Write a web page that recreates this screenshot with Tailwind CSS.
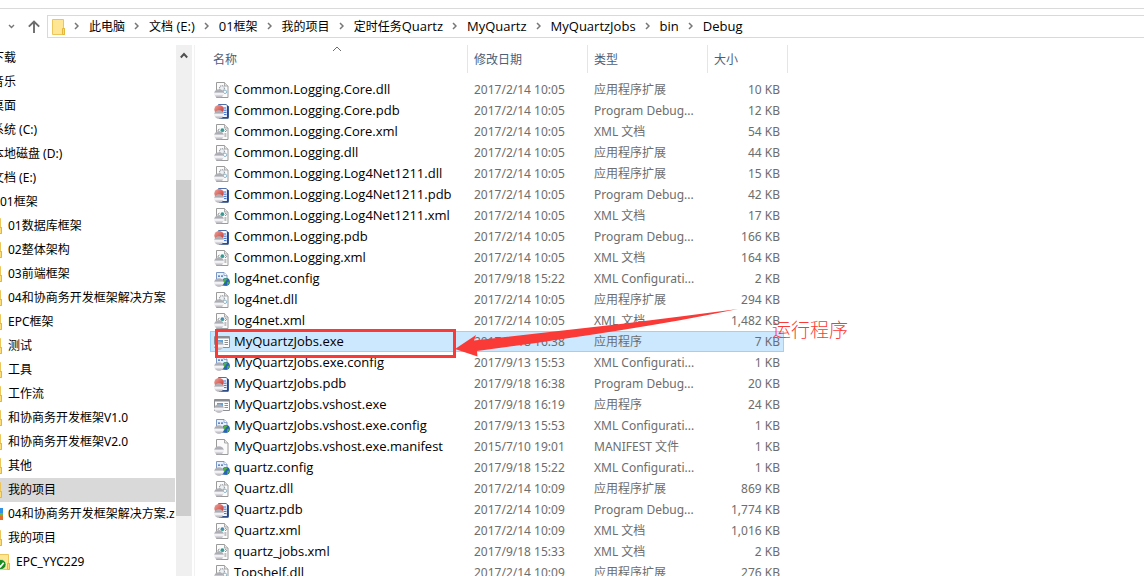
<!DOCTYPE html>
<html lang="zh-CN">
<head>
<meta charset="utf-8">
<meta name="viewport" content="width=device-width, initial-scale=1">
<title>Debug</title>
<script src="https://cdn.jsdelivr.net/npm/@tailwindcss/browser@4"></script>
</head>
<body class="h-screen overflow-hidden bg-white text-black text-[12px] leading-[20px] font-['Noto_Sans','Noto_Sans_CJK_SC',sans-serif]">

<svg class="absolute h-0 w-0" aria-hidden="true">
  <defs>
    <linearGradient id="gear" x1="0" y1="0" x2="0" y2="1">
      <stop offset="0" stop-color="#b4b4ba"/><stop offset=".35" stop-color="#a9a9b2"/><stop offset=".5" stop-color="#f4f4f6"/><stop offset=".7" stop-color="#dcdce2"/><stop offset="1" stop-color="#a8a8ae"/>
    </linearGradient>
    <linearGradient id="red" x1="0" y1="0" x2="1" y2="1">
      <stop offset="0" stop-color="#f0a49c"/><stop offset="1" stop-color="#c22f28"/>
    </linearGradient>
  </defs>
  <symbol id="badge" viewBox="0 0 16 16">
    <ellipse cx="5" cy="11.5" rx="4.8" ry="4.200" fill="url(#gear)"/>
    <rect x=".2" y="10.800" width="9.600" height="2" rx="1" fill="#f3f3f6"/>
  </symbol>
  <symbol id="page" viewBox="0 0 16 16">
    <path d="M2.500 .5h8l3.500 3.500v11.500h-11.500z" fill="#fbfbfb" stroke="#9b9b9b"/>
    <path d="M10.500 .5v3.500h3.500" fill="#e6e6e6" stroke="#9b9b9b" stroke-width=".8"/>
  </symbol>
  <symbol id="dll" viewBox="0 0 16 16">
    <use href="#page"/>
    <circle cx="8" cy="6.200" r="2.500" fill="#eef1f3" stroke="#9aa1a6" stroke-width="1.200" stroke-dasharray="1.300 .6"/>
    <circle cx="11" cy="9.800" r="1.700" fill="#fff" stroke="#8db6cb"/>
    <use href="#badge"/>
  </symbol>
  <symbol id="xml" viewBox="0 0 16 16">
    <use href="#page"/>
    <circle cx="8.400" cy="6.200" r="1.900" fill="#3aa08f"/><circle cx="8" cy="5.600" r=".8" fill="#4a78c8"/>
    <path d="M5.400 4.800L4.100 6.400l1.300 1.600M11.200 4.800l1.300 1.600-1.300 1.600M10.400 10h2M10.400 12h2" fill="none" stroke="#85858a"/>
    <use href="#badge"/>
  </symbol>
  <symbol id="pdb" viewBox="0 0 16 16">
    <path d="M4.500 1.500h7.500l2.500 2v11h-10z" fill="#f4f8ff" stroke="#4f6fa8"/>
    <path d="M13.700 3v12H5" fill="none" stroke="#27457f" stroke-width="1.600"/>
    <path d="M8 5h4M9.500 7.200h3M9.500 9.400h3M10 11.600h2.500" stroke="#3d6fd0"/>
    <circle cx="5" cy="6.600" r="4.700" fill="url(#red)"/>
    <use href="#badge"/>
  </symbol>
  <symbol id="config" viewBox="0 0 16 16">
    <path d="M2.500 1.500h7.500l3 3v10h-10.500z" fill="#e9f1fc" stroke="#7b97c4"/>
    <path d="M10 1.500v3h3" fill="#fff" stroke="#7b97c4" stroke-width=".8"/>
    <path d="M4 5.200h2M7 5.200h2" stroke="#3767bd" stroke-width="1.200"/>
    <circle cx="12" cy="10.800" r="3.900" fill="#2765b4"/>
    <path d="M9.400 8.400c1.500-1.600 3.500-1.400 4 0l-1.600 1.400-1 2.400-1.800-1.600zM13.200 11l2.200-.4c.2 1.600-.8 3-2.400 3.600z" fill="#4fb04c"/>
    <use href="#badge"/>
  </symbol>
  <symbol id="manifest" viewBox="0 0 16 16">
    <use href="#page"/><use href="#badge"/>
  </symbol>
  <symbol id="exe" viewBox="0 0 16 16">
    <path d="M.5 2.500h15v11h-15z" fill="#fdfdfd" stroke="#8b8f93"/>
    <path d="M1 3.500h14" stroke="#8b8f93" stroke-width="2"/>
    <path d="M3 6h6v4H3z" fill="#5f9fd6"/>
    <path d="M10.500 6.500h3.500M10.500 8.500h3.500M10.500 10.500h3.500" stroke="#8f8f8f"/>
    <use href="#badge"/>
  </symbol>
  <symbol id="folder" viewBox="0 0 16 16">
    <path d="M2.500 .5h11v9h1v6h-12z" fill="#ffe694" stroke="#ecc55b"/>
    <path d="M12.500 9.500h2v6h-2z" fill="#fcdc77" stroke="#e5b63c"/>
  </symbol>
  <symbol id="synced" viewBox="0 0 16 16">
    <use href="#folder"/>
    <circle cx="6" cy="10.500" r="5" fill="#168a1c" stroke="#fff" stroke-width=".6"/>
    <path d="M3.500 10.500l2 2.200 3.200-4" fill="none" stroke="#fff" stroke-width="1.800"/>
  </symbol>
  <symbol id="zip" viewBox="0 0 16 16">
    <path d="M1 2h15v5H1z" fill="#2f8fe0"/><path d="M1 7h15v3H1z" fill="#6cb545"/><path d="M1 10h15v4H1z" fill="#e26a2c"/>
  </symbol>
  <symbol id="chev" viewBox="0 0 5 8">
    <path d="M1 1l3 3-3 3" fill="none" stroke="#777" stroke-width="1.500"/>
  </symbol>
</svg>

<div class="flex h-full flex-col">
  <div class="h-[9px] shrink-0 border-b border-[#dadada]"></div>

  <header class="flex h-[36px] shrink-0 items-start pt-[6px]">
    <div class="flex h-[23px] w-[47px] items-center justify-between pr-[6px] pl-[8px]">
      <button type="button" aria-label="最近浏览的位置"><svg class="block h-[5px] w-[7px]" viewBox="0 0 7 5"><path d="M1 1l2.500 2.500L6 1" fill="none" stroke="#777" stroke-width="1.400"/></svg></button>
      <button type="button" aria-label="上移"><svg class="block h-[13px] w-[14px]" viewBox="0 0 14 13"><path d="M7 13V1.500M1.800 6.700L7 1.500l5.200 5.200" fill="none" stroke="#6d6d6d" stroke-width="1.900"/></svg></button>
    </div>
    <nav aria-label="地址" class="flex h-[23px] flex-1 items-center border border-r-0 border-[#d9d9d9] pl-[2px] font-['Open_Sans','Noto_Sans_CJK_SC',sans-serif] text-[13px] whitespace-nowrap">
      <svg class="h-[16px] w-[16px]"><use href="#folder"/></svg>
      <ol id="crumbs" class="-ml-px flex items-center pb-px"></ol>
    </nav>
  </header>

  <div class="flex min-h-0 flex-1">
    <nav aria-label="文件夹" class="w-[175px] shrink-0 overflow-hidden pt-px">
      <ul id="tree"></ul>
    </nav>
    <div class="ml-px flex w-[16px] shrink-0 flex-col bg-[#f0f0f0] pt-px" aria-hidden="true">
      <svg class="mx-[4px] mt-[6px] h-[7px] w-[8px]" viewBox="0 0 8 7"><path d="M.8 5.500L4 2l3.200 3.500" fill="none" stroke="#505050" stroke-width="1.900"/></svg>
      <div class="mt-[121px] h-[336px] w-[15px] bg-[#cdcdcd]"></div>
    </div>
    <main class="ml-[2px] flex-1 overflow-hidden border-l border-[#f2f2f2] pl-[15px]">
      <table class="w-[578px] table-fixed border-separate border-spacing-0 whitespace-nowrap">
        <colgroup><col class="w-[258px]"><col class="w-[120px]"><col class="w-[120px]"><col class="w-[76px]"><col class="w-[4px]"></colgroup>
        <thead class="text-left text-[#4c607a]">
          <tr class="h-[28px]">
            <th scope="col" class="relative border-r border-[#e5e5e5] p-0 pt-[2px] pl-[3px] font-normal">名称
              <svg class="absolute top-[1px] left-[122px] h-[6px] w-[10px]" viewBox="0 0 10 6"><path d="M1 5l4-4 4 4" fill="none" stroke="#6d6d6d"/></svg>
            </th>
            <th scope="col" class="border-r border-[#e5e5e5] p-0 pt-[2px] pl-[6px] font-normal">修改日期</th>
            <th scope="col" class="border-r border-[#e5e5e5] p-0 pt-[2px] pl-[6px] font-normal">类型</th>
            <th scope="col" class="p-0 pt-[2px] pl-[6px] font-normal">大小</th>
            <td class="border-r border-[#e5e5e5] p-0"></td>
          </tr>
          <tr class="h-[6px]"><td colspan="5" class="p-0"></td></tr>
        </thead>
        <tbody id="files" class="text-[#6d6d6d]"></tbody>
      </table>
    </main>
  </div>
</div>

<!-- Annotation drawn over the file list -->
<div class="pointer-events-none absolute top-[329px] left-[215px] h-[29px] w-[241px] border-3 border-[#f93a37]"></div>
<svg class="pointer-events-none absolute top-[300px] left-[450px] h-[60px] w-[300px]" viewBox="450 300 300 60" aria-hidden="true"><path d="M455 349L476 335l-2 5.500C560 331 650 321 738 309 650 327 560 340 477 351l.5 5.500z" fill="#f93a37"/></svg>
<p class="pointer-events-none absolute top-[318px] left-[772px] text-[19px] leading-[24px] font-light text-[#f93a37]">运行程序</p>

<script>
const crumbs = ['此电脑', '文档 (E:)', '01框架', '我的项目', '定时任务Quartz', 'MyQuartz', 'MyQuartzJobs', 'bin', 'Debug'];

// [label, indent class, icon id]
const tree = [
  ['下载', 'ml-[-29px]'], ['音乐', 'ml-[-29px]'], ['桌面', 'ml-[-29px]'], ['系统 (C:)', 'ml-[-29px]'],
  ['本地磁盘 (D:)', 'ml-[-29px]'], ['文档 (E:)', 'ml-[-29px]'], ['01框架', 'ml-[-21px]', 'folder'],
  ['01数据库框架', 'ml-[-13px]', 'folder'], ['02整体架构', 'ml-[-13px]', 'folder'], ['03前端框架', 'ml-[-13px]', 'folder'],
  ['04和协商务开发框架解决方案', 'ml-[-13px]', 'folder'], ['EPC框架', 'ml-[-13px]', 'folder'], ['测试', 'ml-[-13px]', 'folder'],
  ['工具', 'ml-[-13px]', 'folder'], ['工作流', 'ml-[-13px]', 'folder'], ['和协商务开发框架V1.0', 'ml-[-13px]', 'folder'],
  ['和协商务开发框架V2.0', 'ml-[-13px]', 'folder'], ['其他', 'ml-[-13px]', 'folder'], ['我的项目', 'ml-[-13px]', 'folder'],
  ['04和协商务开发框架解决方案.zip', 'ml-[-13px]', 'zip'], ['我的项目', 'ml-[-13px]', 'folder'], ['EPC_YYC229', 'ml-[-5px]', 'synced'],
];
const selectedFolder = 18;

const T = { dll: '应用程序扩展', pdb: 'Program Debug...', xml: 'XML 文档', config: 'XML Configurati...', exe: '应用程序', manifest: 'MANIFEST 文件' };
const files = [
  ['Common.Logging.Core.dll', '2017/2/14 10:05', '10'], ['Common.Logging.Core.pdb', '2017/2/14 10:05', '12'],
  ['Common.Logging.Core.xml', '2017/2/14 10:05', '54'], ['Common.Logging.dll', '2017/2/14 10:05', '44'],
  ['Common.Logging.Log4Net1211.dll', '2017/2/14 10:05', '15'], ['Common.Logging.Log4Net1211.pdb', '2017/2/14 10:05', '42'],
  ['Common.Logging.Log4Net1211.xml', '2017/2/14 10:05', '17'], ['Common.Logging.pdb', '2017/2/14 10:05', '166'],
  ['Common.Logging.xml', '2017/2/14 10:05', '164'], ['log4net.config', '2017/9/18 15:22', '2'],
  ['log4net.dll', '2017/2/14 10:05', '294'], ['log4net.xml', '2017/2/14 10:05', '1,482'],
  ['MyQuartzJobs.exe', '2017/9/18 16:38', '7'], ['MyQuartzJobs.exe.config', '2017/9/13 15:53', '1'],
  ['MyQuartzJobs.pdb', '2017/9/18 16:38', '20'], ['MyQuartzJobs.vshost.exe', '2017/9/18 16:19', '24'],
  ['MyQuartzJobs.vshost.exe.config', '2017/9/13 15:53', '1'], ['MyQuartzJobs.vshost.exe.manifest', '2015/7/10 19:01', '1'],
  ['quartz.config', '2017/9/18 15:22', '1'], ['Quartz.dll', '2017/2/14 10:09', '869'],
  ['Quartz.pdb', '2017/2/14 10:09', '1,774'], ['Quartz.xml', '2017/2/14 10:09', '1,016'],
  ['quartz_jobs.xml', '2017/9/18 15:33', '2'], ['Topshelf.dll', '2017/2/14 10:09', '276'],
];

// Chinese runs are set one size smaller than the Latin text beside them
const mix = s => s.replace(/[\u4e00-\u9fff]+/g, m => `<span class="text-[12px]">${m}</span>`);

document.getElementById('crumbs').innerHTML = crumbs.map(c =>
  `<li class="flex items-center"><svg class="mr-[10px] ml-[9px] h-[8px] w-[5px]"><use href="#chev"/></svg><a href="#">${mix(c)}</a></li>`).join('');

document.getElementById('tree').innerHTML = tree.map(([label, indent, icon], i) =>
  `<li class="${i === selectedFolder ? 'bg-[#d9d9d9]' : ''}"><a href="#" class="flex h-[24px] items-center gap-[5px] whitespace-nowrap"><svg class="${indent} h-[16px] w-[16px] shrink-0">${icon ? `<use href="#${icon}"/>` : ''}</svg><span>${label}</span></a></li>`).join('');

document.getElementById('files').innerHTML = files.map(([name, date, size]) => {
  const kind = name.split('.').pop();
  const c = name === 'MyQuartzJobs.exe' ? 'border-[#99d1ff] bg-[#cce8ff]' : 'border-transparent';
  return `<tr class="h-[21px] leading-[19px]">
    <td class="border-y border-l p-0 ${c}"><a href="#" class="flex items-center gap-[4px] pl-[3px] font-['Open_Sans',sans-serif] text-[13px] text-black"><svg class="h-[16px] w-[16px] shrink-0"><use href="#${kind}"/></svg>${name}</a></td>
    <td class="border-y p-0 pl-[6px] ${c}">${date}</td><td class="border-y p-0 pl-[6px] ${c}">${T[kind]}</td>
    <td class="border-y border-r p-0 pr-[3px] text-right ${c}">${size} KB</td><td class="p-0"></td></tr>`;
}).join('');
</script>
</body>
</html>
